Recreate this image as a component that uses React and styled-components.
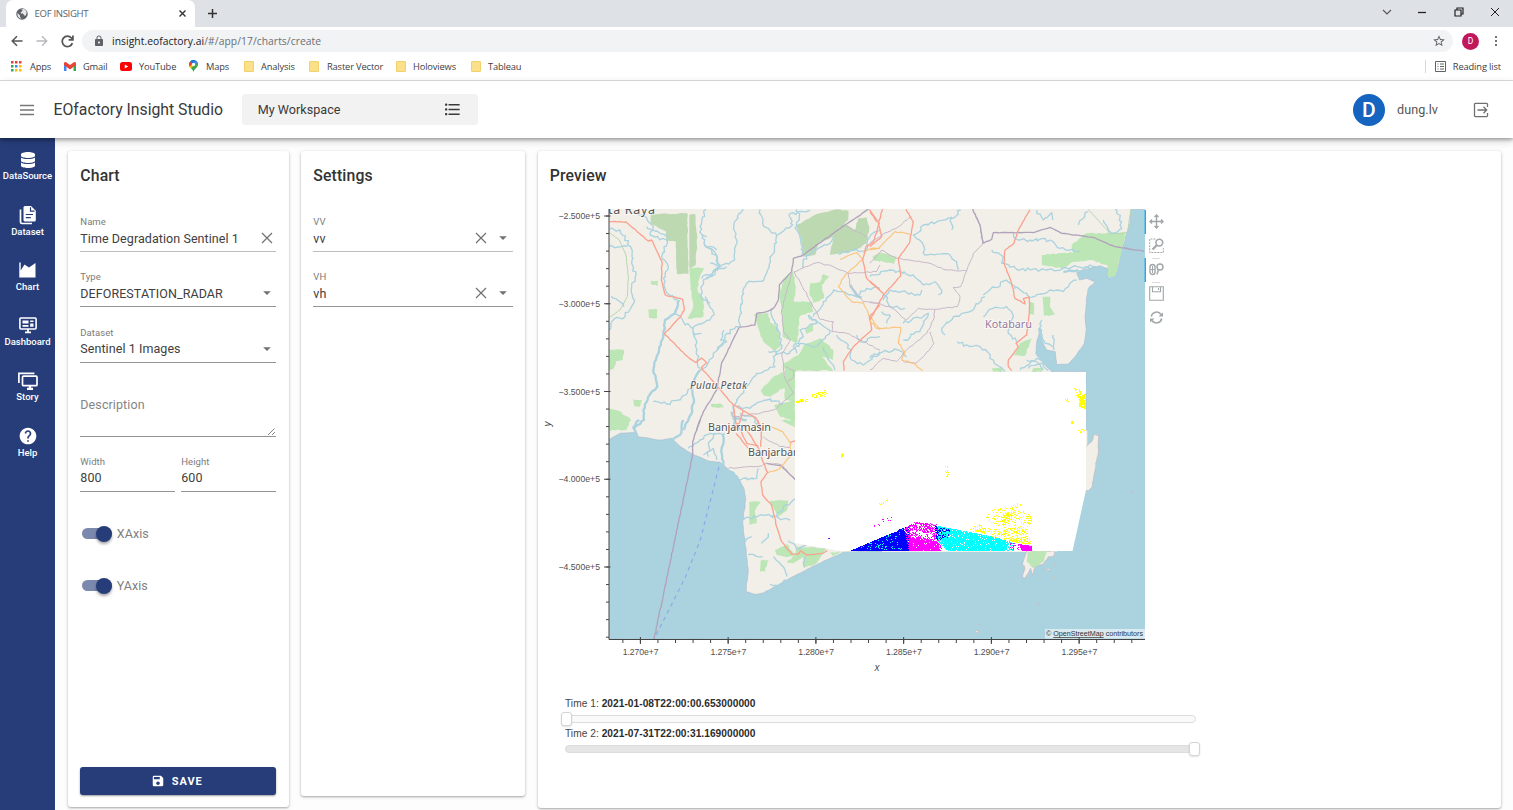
import React from "react";
import styled, { createGlobalStyle } from "styled-components";
import { FaDatabase } from "react-icons/fa";
import { MdSave, MdHelp, MdFormatListBulleted, MdLock, MdStarBorder } from "react-icons/md";

const NAVY = "#263d7a";
const chromeFont = '"Open Sans", "Noto Sans", sans-serif';
const appFont = 'Roboto, "Liberation Sans", sans-serif';
const plotFont = '"Liberation Sans", Arial, sans-serif';

const GlobalStyle = createGlobalStyle`
  * { box-sizing: border-box; }
  body { margin: 0; background: #fff; overflow: hidden; font-family: ${appFont}; }
`;

const Page = styled.div`
  display: flex; flex-direction: column; width: 100vw; height: 100vh; overflow: hidden;
`;

/* ---------- browser frame ---------- */
const TabStrip = styled.div`
  display: flex; height: 27px; flex: none; background: #dee1e6; padding-left: 6px;
`;
const Tab = styled.div`
  display: flex; align-items: center; width: 189px; height: 27px; padding: 0 9px 0 10px;
  background: #fff; border-radius: 7px 7px 0 0; font: 9.6px ${chromeFont}; color: #5f6368;
`;
const TabTitle = styled.span`
  flex: 1; margin-left: 6.5px; letter-spacing: -0.33px;
`;
const NewTab = styled.div`
  display: flex; align-items: center; padding-left: 12px; flex: 1;
`;
const WindowButtons = styled.div`
  display: flex; align-items: center; height: 23px; gap: 25.3px; padding-right: 13px;
`;
const Toolbar = styled.div`
  display: flex; align-items: center; height: 28px; flex: none; padding: 0 12px 0 11px; background: #fff;
`;
const NavButtons = styled.div`
  display: flex; gap: 13px; width: 71px; align-items: center;
`;
const AddressBar = styled.div`
  display: flex; align-items: center; flex: 1; height: 22px; border-radius: 11px; background: #f1f3f4;
  padding: 0 7px 0 11px; color: #5f6368; font: 10.3px ${chromeFont}; margin-right: 9px;
`;
const Url = styled.span`
  flex: 1; margin-left: 7px; color: #6b6f74; letter-spacing: 0.06px;
  b { font-weight: 400; color: #202124; }
`;
const Profile = styled.div`
  display: flex; align-items: center; justify-content: center; width: 17px; height: 17px; border-radius: 50%;
  background: #c2185b; color: #fff; font: 8.5px ${appFont}; margin-right: 12px;
`;
const Bookmarks = styled.div`
  display: flex; align-items: center; height: 26px; flex: none; padding: 0 12px 3px 11px; font: 9.3px ${chromeFont};
  color: #3c4043; border-bottom: 1px solid #dcdee1;
`;
const Bookmark = styled.div`
  display: flex; align-items: center; width: ${(p) => p.$w}px; gap: ${(p) => p.$gap || 7}px; white-space: nowrap;
  letter-spacing: -0.14px;
`;
const Folder = styled.i`
  width: 10px; height: 11px; border-radius: 1px; background: #fbe08a; border: 1px solid #f2d06b;
`;
const ReadingList = styled.div`
  display: flex; align-items: center; gap: 7px; margin-left: auto; padding-left: 9px; height: 13px;
  border-left: 1px solid #d5d7da; letter-spacing: -0.13px;
`;

/* ---------- application header ---------- */
const AppHeader = styled.header`
  display: flex; align-items: center; height: 57px; flex: none; background: #fff; padding: 0 24px 0 20px;
  box-shadow: 0 2px 3px rgba(0,0,0,.25), 0 3px 8px rgba(0,0,0,.18); z-index: 2; color: #3a3a3a;
`;
const AppTitle = styled.h1`
  margin: 0 0 0 19.5px; width: 188.5px; font: 400 15.8px ${appFont}; white-space: nowrap; letter-spacing: -0.01px;
`;
const Workspace = styled.div`
  display: flex; align-items: center; justify-content: space-between; width: 236px; height: 31px;
  padding: 0 15.7px; border-radius: 3px; background: #f2f2f2; font-size: 12.6px; letter-spacing: 0.02px;
`;
const User = styled.div`
  display: flex; align-items: center; margin-left: auto; font-size: 12.6px; letter-spacing: .05px;
  > span { width: 76px; margin-left: 12px; color: #555; }
`;
const Avatar = styled.div`
  display: flex; align-items: center; justify-content: center; width: 32px; height: 32px; border-radius: 50%;
  background: #1565c0; color: #fff; font-size: 21px; font-weight: 500;
`;

/* ---------- body ---------- */
const Body = styled.div`
  display: flex; flex: 1; min-height: 0; background: #fdfdfd;
`;
const Sidebar = styled.nav`
  width: 55px; flex: none; background: ${NAVY}; color: #fff;
`;
const SideItem = styled.div`
  display: flex; flex-direction: column; align-items: center; height: 55.25px; padding-top: 11.5px;
  font-size: 9.5px; font-weight: 500; white-space: nowrap;
  svg { height: 20px; flex: none; }
  span { line-height: 12px; margin-top: 0.8px; }
`;
const Panels = styled.main`
  display: flex; align-items: flex-start; flex: 1; padding: 12.6px 13px 0 13px; gap: 12.5px;
`;
const Card = styled.section`
  display: flex; flex-direction: column; width: ${(p) => p.$w}; height: ${(p) => p.$h}px; padding: 0 12.3px 12px;
  background: #fff; border-radius: 3px; box-shadow: 0 1px 2px rgba(0,0,0,.26), 0 1px 4px rgba(0,0,0,.12);
`;
const CardTitle = styled.h2`
  margin: 0; height: ${(p) => p.$h || 46.2}px; flex: none; padding-top: 15.9px; font: 500 15.8px/19px ${appFont}; color: #333;
  letter-spacing: 0.12px;
`;
const Field = styled.div`
  display: flex; flex-direction: column; justify-content: flex-end; width: 100%; height: ${(p) => p.$h || 55.25}px;
  flex: none; border-bottom: 1px solid ${(p) => p.$line || "#949494"}; padding-bottom: 4.8px;
`;
const Label = styled.label`
  font-size: 9.5px; line-height: 12px; color: #7b7b7b; margin-bottom: 2px; letter-spacing: .06px;
`;
const Value = styled.div`
  display: flex; align-items: center; height: 16px; font-size: 12.5px; color: #404040; letter-spacing: .07px; white-space: nowrap;
  > span { flex: 1; }
  > svg { margin-right: 3.5px; }
  > svg + svg { margin-left: 4.5px; }
  > svg[data-caret] { margin-right: 1.5px; }
`;
const Description = styled.div`
  display: flex; justify-content: space-between; height: 74.5px; flex: none; padding-top: 33px;
  border-bottom: 1px solid #949494; color: #858585; font-size: 12.5px; line-height: 18px; letter-spacing: .1px;
  svg { align-self: flex-end; }
`;
const Pair = styled.div`
  display: grid; grid-template-columns: 1fr 1fr; gap: 6px;
`;
const Switches = styled.div`
  margin-top: 16px; flex: 1;
`;
const SwitchRow = styled.div`
  display: flex; align-items: center; height: 52px; gap: 5px; color: #808080; font-size: 12.5px; letter-spacing: .05px;
`;
const Track = styled.div`
  display: flex; align-items: center; justify-content: flex-end; width: 30px; height: 11px; margin-left: 1.5px;
  border-radius: 6px; background: #7c89ae;
`;
const Thumb = styled.i`
  width: 16px; height: 16px; flex: none; border-radius: 50%; background: ${NAVY}; box-shadow: 0 2px 3px rgba(0,0,0,.35);
`;
const SaveButton = styled.button`
  display: flex; align-items: center; justify-content: center; gap: 7px; height: 28px; width: 100%; border: 0;
  border-radius: 3px; background: ${NAVY}; color: #fff; font: 700 11px ${appFont}; letter-spacing: .95px;
  box-shadow: 0 1px 2px rgba(0,0,0,.4); padding: 0 9px 0 6px;
`;

/* ---------- preview ---------- */
const Plot = styled.div`
  display: flex; align-items: flex-start; height: 498px; margin-left: -8.8px;
`;
const PlotSvg = styled.svg`
  display: block; flex: none; font-family: ${plotFont};
`;
const Tools = styled.div`
  display: flex; flex-direction: column; padding-top: 9.6px; margin-left: -1px;
`;
const Tool = styled.div`
  display: flex; align-items: center; height: 24px; padding-left: 3px;
  border-left: 1px solid ${(p) => (p.$on ? "#26aae1" : "transparent")};
  box-shadow: ${(p) => (p.$on ? "-1px 0 0 #6cc2e8" : "none")};
`;
const Divider = styled.i`
  width: 8px; height: 1px; margin: 0 0 -1px 7px; background: #dcdcdc;
`;
const Sliders = styled.div`
  width: 631px; margin-left: 15.2px;
`;
const SliderLabel = styled.div`
  height: 12px; font: 10.2px/12px ${plotFont}; color: #444; white-space: nowrap; letter-spacing: 0.03px;
  b { color: #2c2c2c; }
`;
const SliderTrack = styled.div`
  display: flex; align-items: center; justify-content: ${(p) => (p.$end ? "flex-end" : "flex-start")};
  height: 8px; margin: 5px 0; border: 1px solid #dcdcdc; border-radius: 4px;
  background: ${(p) => (p.$end ? "#e5e5e5" : "#fafafa")};
`;
const Handle = styled.i`
  width: 11px; height: 14px; margin: 0 -5px; flex: none; border: 1px solid #d4d4d4; border-radius: 3px; background: #fff;
  box-shadow: 0 1px 2px rgba(0,0,0,.12);
`;

/* ---------- icons ---------- */
const Line = ({ w = 14, h = w, vb = "0 0 24 24", d, sw = 2, color = "#5f6368", fill = "none" }) => (
  <svg width={w} height={h} viewBox={vb} fill={fill} stroke={color} strokeWidth={sw}><path d={d} /></svg>
);
const Cross = () => <Line w={12} vb="0 0 12 12" sw={1.2} color="#707070" d="M1 1l10 10M11 1L1 11" />;
const Caret = () => (
  <svg data-caret width="16" height="10" viewBox="0 0 16 10"><path d="M4.2 3.2h7.6L8 7z" fill="#707070" /></svg>
);
const Globe = () => (
  <svg width="12" height="12" viewBox="0 0 24 24"><circle cx="12" cy="12" r="11.5" fill="#5f6368" />
    <path d="M3 10l5 5v3l3 3C6 21 2 17 3 10zM10 3l3 1-1 3-3 2 1 2h4l2 3 2 2c5-4 4-11-2-14z" fill="#fff" opacity=".85" /></svg>
);
const AppsGrid = () => (
  <svg width="11" height="11" viewBox="0 0 11 11">
    {["#ea4335", "#ea4335", "#ea4335", "#34a853", "#4285f4", "#fbbc04", "#34a853", "#fbbc04", "#fbbc04"].map((c, i) => (
      <rect key={i} x={(i % 3) * 4} y={Math.floor(i / 3) * 4} width="2.5" height="2.5" fill={c} />
    ))}
  </svg>
);
const Gmail = () => (
  <svg width="12" height="9" viewBox="0 0 24 18"><path d="M0 3v15h5V8z" fill="#4285f4" /><path d="M24 3v15h-5V8z" fill="#34a853" />
    <path d="M0 3c0-3 3-4 5-2l7 5 7-5c2-2 5-1 5 2v3l-12 9L0 6z" fill="#ea4335" /></svg>
);
const YouTube = () => (
  <svg width="12" height="9" viewBox="0 0 24 18"><rect width="24" height="18" rx="5" fill="#f00" /><path d="M9.5 5l7 4-7 4z" fill="#fff" /></svg>
);
const MapsPin = () => (
  <svg width="9" height="12" viewBox="0 0 18 24"><path d="M9 0a9 9 0 0 0-9 9c0 6 7 8 9 15 2-7 9-9 9-15a9 9 0 0 0-9-9z" fill="#34a853" />
    <path d="M2 3.500A9 9 0 0 1 12 .5L9 9z" fill="#1a73e8" /><path d="M2 3.500C0 6-.5 9 1 13l8-4z" fill="#ea4335" />
    <path d="M1 13l12-9 3 0-12 13z" fill="#fbbc04" /><path d="M12 .5c3 1 5 3 6 6L9 9z" fill="#4285f4" /><circle cx="9" cy="9" r="3.300" fill="#fff" /></svg>
);
const DocsIcon = () => (
  <svg width="18" height="20" viewBox="0 0 18 20" fill="none">
    <path d="M1.500 4.500V17a1.500 1.500 0 0 0 1.500 1.500h10" stroke="#fff" strokeWidth="1.700" />
    <path d="M6 1h6l4.800 4.800V15a1.500 1.500 0 0 1-1.500 1.500H6A1.500 1.500 0 0 1 4.500 15V2.500A1.500 1.500 0 0 1 6 1z" fill="#fff" />
    <path d="M11.500 2.200v4h4M6.800 9.500h7.200M6.800 12.700h5" stroke={NAVY} strokeWidth="1.200" />
  </svg>
);
const AreaIcon = () => (
  <svg width="17" height="20" viewBox="0 0 17 20"><path d="M.3 2.500h1.400v8L5.500 4.500l4.500 3L16.500 3V17.500H.3z" fill="#fff" /></svg>
);
const DashIcon = () => (
  <svg width="18" height="20" viewBox="0 0 18 20" fill="none" stroke="#fff"><rect x=".9" y="3" width="16.200" height="11" rx="1" strokeWidth="1.600" />
    <path d="M3.500 5.500h6v3h-6zM3.500 10h6v1.800h-6zM11.200 5.500h3.300v1.500h-3.300zM11.200 8.500h3.300v3.300h-3.300z" fill="#fff" stroke="none" />
    <path d="M6 17.300h6M9 14v3" strokeWidth="1.800" /></svg>
);
const StoryIcon = () => (
  <svg width="20" height="20" viewBox="0 0 20 20" fill="none" stroke="#fff" strokeWidth="1.700"><path d="M.9 12V2.300h15.500" />
    <rect x="4.500" y="5.200" width="14.500" height="9.500" rx="1" /><path d="M9 17.800h6M12 15v2" strokeWidth="2.200" /></svg>
);
const ExitIcon = () => (
  <Line w={16} vb="0 0 16 16" sw={1.3} color="#707070" d="M14.500 5V2.200c0-.5-.3-.8-.8-.8H2.300c-.5 0-.8.3-.8.8v11.600c0 .5.3.8.8.8h11.400c.5 0 .8-.3.8-.8V11M4.500 8h9M10.500 4.800L13.700 8l-3.200 3.200" />
);

/* ---------- map drawing ---------- */
const random = (seed) => () => {
  seed = (seed * 16807) % 2147483647;
  return seed / 2147483647;
};

// Turns "x,y x,y" into a path whose segments are broken up by small random bends.
const bend = (text, amp = 5, close = false) => {
  const pts = text.trim().split(/\s+/).map((p) => p.split(",").map(Number));
  const rnd = random(Math.abs(Math.round(pts[0][0] * 31 + pts[0][1] * 17)) + 7);
  let d = `M${pts[0]}`;
  for (let i = 1; i < pts.length; i++) {
    const [x0, y0] = pts[i - 1], [x1, y1] = pts[i];
    const n = Math.max(1, Math.round(Math.hypot(x1 - x0, y1 - y0) / 9));
    for (let k = 1; k < n; k++) {
      d += `L${(x0 + ((x1 - x0) * k) / n + (rnd() - 0.5) * amp).toFixed(1)},${(y0 + ((y1 - y0) * k) / n + (rnd() - 0.5) * amp).toFixed(1)}`;
    }
    d += `L${x1},${y1}`;
  }
  return close ? d + "Z" : d;
};

const KINDS = {
  sea: { fill: "#abd3df", stroke: "#a6b4c8", strokeWidth: 1.5, amp: 2, close: true },
  open: { fill: "#abd3df", amp: 0, close: true },
  land: { fill: "#f2efe9", stroke: "#c5b3bd", strokeWidth: 2, amp: 3, close: true },
  wood: { fill: "#bcd9b2", amp: 3, close: true },
  green: { fill: "#bce6b5", amp: 4, close: true },
  river: { stroke: "#abd3df", strokeWidth: 4, amp: 10 },
  wide: { stroke: "#abd3df", strokeWidth: 7, amp: 5 },
  road: { stroke: "#fba28f", strokeWidth: 4, amp: 2 },
  minor: { stroke: "#fbc57f", strokeWidth: 3.5, amp: 4 },
  border: { stroke: "#c8b7c8", strokeWidth: 3, amp: 4 },
  state: { stroke: "#b1a2bb", strokeWidth: 4, amp: 2 },
  park: { stroke: "#b6d6ad", strokeWidth: 3, amp: 1 },
};
const Tile = ({ x, y, features }) => (
  <g transform={`translate(${x} ${y}) scale(.33333)`} fill="none" strokeLinejoin="round">
    {features.map(([kind, pts], i) => {
      const { amp, close, ...style } = KINDS[kind];
      return <path key={i} d={bend(pts, amp, close)} {...style} />;
    })}
  </g>
);

const NORTH_WEST = [
  ["wood", "152,42 262,40 265,222 230,222 228,125 198,122 198,95 152,70"],
  ["wood", "268,45 285,42 292,110 287,195 268,205"],
  ["green", "268,203 312,204 300,230 292,270 312,300 310,350 262,356 280,320 272,260"],
  ["wood", "588,78 650,42 710,28 745,32 745,60 700,110 655,130 645,165 610,170 602,110"],
  ["wood", "690,165 702,105 735,72 765,90 775,55 800,52 808,80 800,130 765,152"],
  ["green", "818,172 840,158 840,185 820,180"],
  ["green", "580,215 588,260 582,305 635,305 640,335 600,348 590,430 548,410 545,330 538,290 550,235"],
  ["green", "630,250 660,245 670,222 688,230 665,255 672,295 640,310 628,280"],
  ["green", "462,342 505,340 510,365 535,385 542,440 520,452 490,425 480,400"],
  ["green", "612,435 660,415 700,450 698,480 665,470 700,512 588,512 585,605 555,600 552,490 600,460"],
  ["green", "482,572 520,530 552,515 555,560 512,590 490,585"],
  ["green", "522,615 585,600 585,665 540,650"],
  ["green", "152,242 174,242 174,258 154,254"], ["green", "145,328 172,328 172,354 147,354"],
  ["green", "28,448 72,450 68,480 48,484 40,508 28,510"], ["green", "100,598 126,600 120,620 102,618"],
  ["green", "28,625 55,632 92,656 80,690 28,690"], ["green", "332,612 365,612 372,622 335,622"],
  ["green", "615,390 640,370 640,392 620,402"],
  ["park", "28,98 58,120 78,165 85,230 82,290 60,330 28,352"],
  ["river", "28,140 82,138"], ["river", "30,88 60,90 92,140 95,190 108,225 95,260 104,300 75,350 45,355 28,390"],
  ["river", "34,288 60,305 72,320"],
  ["river", "75,28 135,50 160,80 150,105 200,120 185,170 205,200 190,235 202,280 232,300"],
  ["river", "140,80 180,100 205,115"],
  ["wide", "238,300 225,340 195,360 190,410 170,470 160,510 172,560 145,590 130,630 132,660 100,688"],
  ["river", "225,335 250,365 278,385 330,360 342,345 322,300 315,290"],
  ["river", "318,28 300,80 312,130 335,150 360,195 342,225 310,240 302,285 330,310"],
  ["river", "312,130 350,150"], ["river", "305,105 320,110"],
  ["river", "430,28 402,70 410,120 404,180 360,200 320,238"],
  ["river", "320,138 350,165 358,200 330,190"], ["river", "305,235 330,225 360,205 380,200"],
  ["river", "480,28 488,70 530,108 508,200 492,240 440,250 425,290 418,380"],
  ["river", "530,105 578,75 568,42 630,30"], ["river", "590,28 598,60 585,85 602,120 606,165"],
  ["river", "610,205 618,165 690,130 700,110"], ["river", "715,162 760,150 800,150 812,105 840,90"],
  ["river", "418,380 380,400 368,430 340,460 325,488 300,510"],
  ["river", "372,390 362,420 380,425 352,448"],
  ["wide", "300,510 275,550 282,600 275,640 250,690"],
  ["river", "280,385 290,430 292,480 300,505"], ["river", "278,400 304,400"],
  ["river", "160,605 200,612 235,600 275,568"], ["river", "515,325 518,355 540,400 545,445 520,470 525,500 470,520 440,560 410,600 398,640"],
  ["river", "505,455 560,462 600,430 650,440 690,392 660,370 625,345"],
  ["river", "625,345 650,370 600,390 610,410 580,440 590,460"],
  ["river", "670,440 690,485 705,510"], ["river", "640,350 700,270 770,290 800,265 840,265"],
  ["river", "710,405 745,435 755,480 790,495 840,455"], ["river", "770,405 780,425 840,410"],
  ["wide", "752,255 772,290 785,292"], ["river", "410,620 450,625 500,600 550,610"],
  ["wide", "395,635 405,665 400,690"], ["wide", "398,655 440,660"], ["river", "420,640 460,650 470,680"],
  ["state", "418,382 465,375 470,340 500,335 520,325 535,300 538,255 575,215 580,175 605,168 735,75 805,28"],
  ["state", "418,382 365,488 350,570 310,635 290,690"],
  ["border", "735,75 770,95 800,110"], ["border", "583,215 650,188 700,200 745,220 830,215 840,195"],
  ["border", "583,215 660,358 700,365 695,395 740,400 840,450"], ["border", "577,215 545,330 550,395 572,420 545,465 555,535 580,580 550,605 530,625 480,640 400,650"],
  ["border", "745,220 750,260 790,305 840,310"], ["border", "555,500 580,510 582,530 562,545"],
  ["minor", "720,178 770,158 788,178 735,225 715,260 755,305 790,308 810,350 840,390"], ["minor", "790,160 815,145 840,145"],
  ["road", "28,65 78,66 145,123 155,120 186,185 184,240 196,285 248,298 253,330 240,352 193,402 268,475 288,488 304,474 320,488 304,504 400,615 430,632 470,655"],
  ["road", "808,28 838,70 820,125 798,140 788,180 800,235 840,270"], ["road", "840,315 808,350 815,390 760,440 730,485 732,512"],
  ["road", "400,615 412,690"], ["road", "430,632 410,690"], ["road", "470,655 482,690"],
];
const NORTH_EAST = [
  ["sea", "783,28 780,70 770,100 752,160 745,200 717,238 713,205 690,197 640,210 620,218 628,240 650,235 675,245 655,265 650,290 645,350 649,390 643,430 615,470 595,492 560,494 556,455 530,450 516,425 510,385 500,430 497,460 520,490 545,515 648,515 648,690 840,690 840,28"],
  ["green", "515,165 610,158 605,135 650,100 768,98 752,165 735,228 715,230 712,195 660,180 610,185 575,205 516,195"],
  ["green", "8,170 35,158 80,170 72,192 12,180"], ["green", "518,290 540,290 540,320 555,345 522,348"],
  ["green", "450,430 485,415 465,468 432,465"], ["green", "365,505 395,503 398,515 370,515"], ["green", "478,305 492,310 492,345 478,343"],
  ["green", "490,505 520,503 515,515 485,515"],
  ["park", "655,28 722,102 772,98 783,28"],
  ["river", "272,30 250,55 160,75 130,105 160,135 165,165 240,165 260,185 265,210"], ["river", "245,50 245,90"],
  ["river", "0,230 60,210 130,225 155,250 200,250 215,270 205,285"], ["river", "40,300 60,270 150,285 155,270"],
  ["river", "40,280 60,320 105,325"], ["river", "340,285 410,240"], ["river", "345,290 300,335 250,350 215,385 225,405"],
  ["river", "365,150 400,170 395,190 440,208 530,210 620,200 660,205"], ["river", "430,100 445,120 540,120 570,145 630,155"],
  ["river", "340,350 370,325 410,320 430,350 415,400 440,425"], ["river", "410,240 480,292 540,270 580,275 600,250 620,240"],
  ["river", "262,425 300,440 330,440 370,480 405,515"], ["river", "0,475 40,455 85,450 110,470"], ["river", "100,370 175,340 150,395 100,420"],
  ["river", "35,335 60,345 50,370"], ["river", "500,30 520,60 545,38 548,60"], ["river", "655,35 632,60 625,75"],
  ["river", "700,60 725,100 755,85 755,65 735,28"], ["river", "515,360 508,385 520,420 548,440"], ["river", "550,405 552,450"],
  ["wide", "508,385 518,430 500,455"], ["river", "450,510 500,475 530,490"], ["river", "475,505 510,490 535,512"], ["river", "620,215 660,195 690,208"],
  ["river", "470,480 500,485 520,510"], ["wide", "580,215 625,210"],
  ["border", "125,50 85,80 35,105 0,130"], ["border", "0,190 35,150 80,175 120,180 180,190 220,208 290,213 310,160 338,132 330,75 308,28"],
  ["border", "290,213 272,260 250,262 270,290 262,320 190,328 145,325 110,360 60,320 0,305"], ["border", "195,330 190,360 170,400 110,450 80,485 40,475 0,510"],
  ["border", "180,395 192,430 160,470 135,490 100,485"],
  ["state", "340,130 330,75 308,28"],
  ["state", "340,130 365,118 370,98 490,98 540,82 575,100 670,112 735,140 822,154"],
  ["minor", "0,150 25,145 75,95 120,103"], ["minor", "0,360 20,385 92,382 85,430 105,455 95,480 130,490 158,512"],
  ["road", "38,28 25,70 35,110 0,140"], ["road", "0,35 20,65"], ["road", "108,28 130,65 118,130 85,175 92,228 40,285 0,360"], ["road", "0,245 40,280"],
  ["road", "480,30 445,90 432,130 405,150 402,190 425,250 435,295 465,312 460,296 478,292 478,340 470,405 438,430 445,440 415,480 415,500 425,512"],
];
const SOUTH_WEST = [
  ["sea", "28,58 60,40 105,37 115,50 180,60 215,55 245,82 278,103 330,124 360,126 385,148 412,168 432,205 437,240 428,310 437,380 445,450 438,515 465,523 490,519 560,480 640,438 730,397 845,392 845,658 28,658"],
  ["green", "28,0 95,0 75,22 28,34"], ["green", "540,0 585,0 585,22"],
  ["green", "510,242 565,242 560,272 535,290 512,255"], ["green", "448,245 482,245 465,272 470,310 448,315"],
  ["green", "525,390 560,372 585,405 560,412 530,405"], ["green", "590,380 680,384 650,430 612,445 608,410 580,430 560,428 585,405"],
  ["green", "482,422 505,420 495,455 480,455"], ["green", "690,398 722,394 700,408"],
  ["wide", "118,0 100,22 112,48"], ["wide", "250,0 240,45 215,60"], ["river", "265,85 300,60 330,40 370,45"],
  ["wide", "372,40 365,100 370,135"], ["river", "310,105 340,85 350,120"], ["river", "325,110 325,70 345,40"],
  ["river", "370,140 420,180 470,175 475,145"], ["river", "430,300 480,285 530,290 550,260 585,238"], ["river", "530,290 570,300"],
  ["river", "485,370 505,340"], ["river", "437,365 455,350"], ["river", "445,405 488,410"], ["river", "520,410 550,440 560,470"],
  ["river", "510,492 535,496 555,478"], ["river", "565,362 590,388 620,370"], ["river", "612,440 615,410"],
  ["border", "385,145 470,140 500,130 545,135 560,150 585,180"], ["border", "490,50 540,80 570,82"], ["state", "500,130 545,138 585,178"],
  ["state", "300,0 278,65 278,103 162,658"], ["minor", "515,20 548,35 572,70 570,110 540,145 505,158"],
  ["road", "412,10 440,70 475,78"], ["road", "408,40 445,85"], ["road", "430,15 478,88 487,120 503,158 483,185 488,225 515,255 530,320 545,365 575,402 595,402 602,392 620,405 668,400 682,392"],
  ["road", "473,0 485,30 482,80"], ["road", "570,68 585,63"],
];
const SOUTH_EAST = [
  ["open", "-85,396 560,396 560,100 652,100 652,-40 840,-40 840,660 -85,660"],
  ["land", "646,82 665,65 675,43 686,48 685,95 672,165 667,200 655,212 646,212"],
  ["land", "470,393 555,393 552,408 535,410 520,432 495,440 488,465 482,445 465,475 457,470 465,445 457,432"],
  ["green", "473,395 532,393 520,425 490,445 470,425"],
  ["land", "530,448 538,445 540,450 532,453"], ["land", "550,433 557,433 557,438"], ["land", "550,470 558,472 556,478"],
  ["land", "315,632 325,632 324,638 316,638"], ["land", "785,215 791,215 791,218"], ["land", "502,551 507,551 507,554"], ["land", "324,612 329,612 328,615"],
];

// Speckled pixels of a classification class, filling the polygon at the given density.
const inside = (x, y, poly) => {
  let hit = false;
  for (let i = 0, j = poly.length - 1; i < poly.length; j = i++) {
    const [xi, yi] = poly[i], [xj, yj] = poly[j];
    if (yi > y !== yj > y && x < ((xj - xi) * (y - yi)) / (yj - yi) + xi) hit = !hit;
  }
  return hit;
};
const speckle = (poly, density, seed) => {
  const rnd = random(seed);
  const xs = poly.map((p) => p[0]), ys = poly.map((p) => p[1]);
  let d = "";
  for (let y = Math.floor(Math.min(...ys)); y < Math.max(...ys); y++)
    for (let x = Math.floor(Math.min(...xs)); x < Math.max(...xs); x++)
      if (inside(x + 0.5, y + 0.5, poly) && rnd() < density) d += `M${x} ${y}h1v1h-1z`;
  return d;
};
const BLUE = "#0000ff", CYAN = "#00ffff", PINK = "#ff00ff", YELLOW = "#ffff00";
const CLASSES = [
  [BLUE, 1, [[850, 551], [880, 538], [903, 529], [908, 536], [909, 551]]],
  [CYAN, 0.1, [[852, 551], [880, 539], [903, 529], [908, 551]]],
  [BLUE, 0.55, [[898, 530], [909, 526], [912, 551], [902, 551]]],
  [PINK, 0.55, [[904, 529], [915, 522], [937, 524], [942, 551], [909, 551]]],
  [PINK, 0.85, [[909, 538], [925, 537], [940, 544], [940, 551], [909, 551]]],
  ["#fff", 0.55, [[915, 531], [930, 533], [941, 546], [943, 535], [925, 541]]],
  [CYAN, 0.92, [[938, 526], [970, 532], [999, 538], [1009, 543], [1005, 551], [948, 551], [938, 541]]],
  [CYAN, 0.45, [[995, 538], [1013, 542], [1014, 551], [997, 551]]],
  [BLUE, 0.3, [[935, 526], [950, 529], [949, 539], [936, 540]]],
  [PINK, 0.25, [[1010, 543], [1020, 544], [1020, 551], [1008, 551]]],
  [YELLOW, 0.28, [[966, 530], [980, 524], [990, 529], [1025, 528], [1033, 545], [1018, 543], [990, 536]]],
  [YELLOW, 0.6, [[970, 531], [984, 528], [986, 534], [977, 532]]],
  [YELLOW, 0.5, [[1003, 515], [1012, 510], [1013, 520], [1002, 522]]],
  [YELLOW, 0.45, [[1007, 538], [1027, 537], [1033, 546], [1012, 542]]],
  [YELLOW, 0.18, [[985, 519], [992, 510], [1015, 505], [1032, 516], [1031, 532], [998, 528]]],
  [YELLOW, 0.09, [[1010, 504], [1024, 503], [1024, 512], [1010, 510]]],
  [PINK, 1, [[1019, 544], [1032, 546], [1032, 551], [1022, 551]]],
  [YELLOW, 0.75, [[795, 401], [802, 399], [810, 399], [807, 402], [797, 403]]],
  [YELLOW, 0.38, [[810, 395], [826, 390], [829, 396], [820, 399], [812, 397]]],
  [YELLOW, 0.9, [[1079, 400], [1086, 393], [1086, 409], [1079, 407]]],
  [YELLOW, 0.35, [[1074, 388], [1080, 389], [1084, 399], [1077, 398]]],
  [YELLOW, 0.3, [[1064, 399], [1071, 398], [1068, 403]]],
  [YELLOW, 0.7, [[1071, 421], [1074, 421], [1074, 424], [1071, 424]]],
  [YELLOW, 0.35, [[1077, 430], [1085, 429], [1085, 436]]],
  [YELLOW, 0.75, [[840, 456], [843, 453], [844, 455], [842, 458]]],
  [YELLOW, 0.4, [[945, 466], [949, 466], [949, 477], [946, 477]]],
  [YELLOW, 0.3, [[878, 504], [888, 499], [888, 502], [880, 505]]],
  [PINK, 0.07, [[874, 521], [894, 517], [892, 524], [873, 527]]],
  ["#8000ff", 1, [[828, 538], [830, 538], [830, 539], [828, 539]]],
];

const range = (from, to, step) => Array.from({ length: Math.floor((to - from) / step) + 1 }, (_, i) => from + i * step);

const MapPlot = () => (
  <PlotSvg width="605" height="478" viewBox="541 200 605 478">
    <defs><clipPath id="frame"><rect x="609" y="209" width="536" height="430" /></clipPath></defs>
    <g clipPath="url(#frame)">
      <rect x="609" y="209" width="536" height="430" fill="#f2efe9" />
      <Tile x={600} y={420} features={SOUTH_WEST} />
      <Tile x={600} y={200} features={NORTH_WEST} />
      <Tile x={870} y={200} features={NORTH_EAST} />
      <Tile x={870} y={420} features={SOUTH_EAST} />
      <path d="M719 467L700 541L685 578L654 639" stroke="#8fa9e6" strokeWidth="1.200" strokeDasharray="4 4" fill="none" />
      <g fontFamily='"Noto Sans", sans-serif' fontSize="10.800" fill="#555" stroke="#fff" strokeOpacity=".6" strokeWidth="2" paintOrder="stroke">
        <text x="608" y="213.500" fontSize="12.500" textLength="47">ta Raya</text>
        <text x="690" y="389" fontStyle="italic" textLength="57" fontSize="10.200">Pulau Petak</text>
        <text x="708" y="431" textLength="63">Banjarmasin</text>
        <text x="748" y="456" textLength="56">Banjarbaru</text>
        <text x="985" y="328" textLength="47" fill="#957a9d">Kotabaru</text>
      </g>
      <path d="M795 372H1086V490L1072.500 551H840L795 543Z" fill="#fff" />
      <g shapeRendering="crispEdges">
        {CLASSES.map(([color, density, poly], i) => <path key={i} fill={color} d={speckle(poly, density, 101 + i * 37)} />)}
      </g>
      <rect x="1045" y="629" width="100" height="9.500" fill="#fff" opacity=".55" />
      <text x="1046" y="636" fontSize="7" fill="#333" textLength="97" lengthAdjust="spacingAndGlyphs">
        © <tspan textDecoration="underline">OpenStreetMap</tspan> contributors
      </text>
    </g>
    <g stroke="#444" strokeWidth="1">
      <path d="M609 209V639.500M609 639.500H1145" />
      <path d={range(216, 638, 87.75).map((y) => `M604 ${y}h6.500`).join("") + range(216, 638, 17.55).map((y) => `M606 ${y}h3`).join("")} />
      <path d={range(640.4, 1100, 87.75).map((x) => `M${x} 637v7`).join("") + range(622.85, 1142, 17.55).map((x) => `M${x} 640v3`).join("")} />
    </g>
    <g fontSize="8.700" fill="#505050">
      {["−2.500e+5", "−3.000e+5", "−3.500e+5", "−4.000e+5", "−4.500e+5"].map((t, i) => (
        <text key={t} x="558.500" y={219 + i * 87.75} textLength="41.500">{t}</text>
      ))}
      {["1.270e+7", "1.275e+7", "1.280e+7", "1.285e+7", "1.290e+7", "1.295e+7"].map((t, i) => (
        <text key={t} x={622.7 + i * 87.75} y="654.500" textLength="36">{t}</text>
      ))}
      <text x="877" y="670.500" fontStyle="italic" fontSize="10" textAnchor="middle">x</text>
      <text transform="translate(551 424) rotate(-90)" fontStyle="italic" fontSize="10" textAnchor="middle">y</text>
    </g>
  </PlotSvg>
);

const G = "#a1a6a9";
const PlotTools = () => (
  <Tools>
    <Tool $on><Line w={15} vb="0 0 15 15" sw={1.4} color={G} d="M7.500 1v13M1 7.500h13M5.500 3l2-2 2 2M5.500 12l2 2 2-2M3 5.500l-2 2 2 2M12 5.500l2 2-2 2" /></Tool>
    <Tool>
      <svg width="15" height="15" viewBox="0 0 15 15" fill="none" stroke={G}><path d="M6.500 1H.7v13.500h13.600V10" strokeDasharray="2 1" />
        <circle cx="10.300" cy="4.600" r="3.400" strokeWidth="1.600" /><path d="M8 7l-4.500 4.500" strokeWidth="2.200" /></svg>
    </Tool>
    <Divider />
    <Tool $on>
      <svg width="15" height="15" viewBox="0 0 15 15" fill="none" stroke={G} strokeWidth="1.400"><rect x="1" y="2.500" width="5" height="10" rx="2.500" />
        <path d="M3.500 4v7M1.500 7.500h4" strokeWidth="1" /><circle cx="11" cy="5" r="3" /><path d="M9.500 7.500L8 12.500" /></svg>
    </Tool>
    <Divider />
    <Tool><Line w={15} vb="0 0 15 15" sw={1.1} color={G} d="M.7.7h13.600v13.600H.7zM3.500 .7v5h8v-5M9.500 2v2" /></Tool>
    <Tool>
      <svg width="15" height="15" viewBox="0 0 15 15" fill="none" stroke={G} strokeWidth="1.600">
        <path d="M2.300 6.500a5.300 5.300 0 0 1 9.700-2M12.700 8.500a5.300 5.300 0 0 1-9.700 2" />
        <path d="M14 2.500v4h-4.500zM1 12.500v-4h4.500z" fill={G} stroke="none" />
      </svg>
    </Tool>
  </Tools>
);

const SIDE = [
  ["DataSource", <FaDatabase size={14} />], ["Dataset", <DocsIcon />], ["Chart", <AreaIcon />],
  ["Dashboard", <DashIcon />], ["Story", <StoryIcon />], ["Help", <MdHelp size={20} />],
];

const FormField = ({ label, value, clear, caret, ...rest }) => (
  <Field {...rest}>
    <Label>{label}</Label>
    <Value><span>{value}</span>{clear && <Cross />}{caret && <Caret />}</Value>
  </Field>
);

export default function App() {
  return (
    <Page>
      <GlobalStyle />
      <TabStrip>
        <Tab><Globe /><TabTitle>EOF INSIGHT</TabTitle><Line w={7} vb="0 0 7 7" sw={1.4} color="#333" d="M.5.5l6 6M6.500.5l-6 6" /></Tab>
        <NewTab><Line w={11} vb="0 0 11 11" sw={1.5} color="#333" d="M5.500 1v9M1 5.500h9" /></NewTab>
        <WindowButtons>
          <Line w={10} vb="0 0 10 10" sw={1.1} color="#555" d="M1 3l4 4 4-4" />
          <Line w={10} vb="0 0 10 10" sw={1.3} color="#222" d="M1 5.500h8" />
          <Line w={12} h={10} vb="-1 0 12 10" sw={1.2} color="#222" d="M1 3h6v6H1zM3 3V1h6v6H7" />
          <Line w={10} vb="0 0 10 10" sw={1} color="#222" d="M1 1l8 8M9 1L1 9" />
        </WindowButtons>
      </TabStrip>
      <Toolbar>
        <NavButtons>
          <Line w={12} vb="0 0 12 12" sw={1.500} color="#555" d="M11.500 6H1.500M6 1.200L1.200 6 6 10.800" />
          <Line w={12} vb="0 0 12 12" sw={1.3} color="#b5b8bb" d="M.5 6h10M6 1.200L10.800 6 6 10.800" />
          <Line w={13} vb="0 0 12 12" sw={1.600} color="#555" d="M10.500 7.500A4.800 4.800 0 1 1 9.600 2.800L11 4.300M11 .5v4H7" />
        </NavButtons>
        <AddressBar><MdLock size={12} /><Url><b>insight.eofactory.ai</b>/#/app/17/charts/create</Url><MdStarBorder size={14} /></AddressBar>
        <Profile>D</Profile>
        <svg width="10" height="12" viewBox="0 0 10 12" fill="#444"><circle cx="5" cy="2" r="1" /><circle cx="5" cy="6" r="1" /><circle cx="5" cy="10" r="1" /></svg>
      </Toolbar>
      <Bookmarks>
        <Bookmark $w={53} $gap={8}><AppsGrid />Apps</Bookmark>
        <Bookmark $w={56}><Gmail />Gmail</Bookmark>
        <Bookmark $w={69}><YouTube />YouTube</Bookmark>
        <Bookmark $w={55} $gap={8}><MapsPin />Maps</Bookmark>
        <Bookmark $w={65}><Folder />Analysis</Bookmark>
        <Bookmark $w={87} $gap={8}><Folder />Raster Vector</Bookmark>
        <Bookmark $w={75}><Folder />Holoviews</Bookmark>
        <Bookmark $w={70}><Folder />Tableau</Bookmark>
        <ReadingList><Line w={11} vb="0 0 11 11" sw={1} d="M.5.5h10v10H.5zM2.500 3h1M2.500 5.500h1M2.500 8h1M5 3h4M5 5.500h4M5 8h4" />Reading list</ReadingList>
      </Bookmarks>
      <AppHeader>
        <Line w={14} h={12} vb="0 0 14 12" sw={1.4} color="#777" d="M0 1.500h14M0 6h14M0 10.500h14" />
        <AppTitle>EOfactory Insight Studio</AppTitle>
        <Workspace>My Workspace<MdFormatListBulleted size={19} /></Workspace>
        <User><Avatar>D</Avatar><span>dung.lv</span><ExitIcon /></User>
      </AppHeader>
      <Body>
        <Sidebar>{SIDE.map(([name, icon]) => <SideItem key={name}>{icon}<span>{name}</span></SideItem>)}</Sidebar>
        <Panels>
          <Card $w="220.500px" $h={656.6}>
            <CardTitle>Chart</CardTitle>
            <FormField label="Name" value="Time Degradation Sentinel 1" clear $line="#bdbdbd" />
            <FormField label="Type" value="DEFORESTATION_RADAR" caret />
            <FormField label="Dataset" value="Sentinel 1 Images" caret />
            <Description>Description<Line w={8} vb="0 0 8 8" sw={0.9} color="#777" d="M0 7L6.500.5M4 7l3-3" /></Description>
            <Pair>
              <FormField label="Width" value="800" $h={54.5} /><FormField label="Height" value="600" $h={54.5} />
            </Pair>
            <Switches>
              <SwitchRow><Track><Thumb /></Track>XAxis</SwitchRow>
              <SwitchRow><Track><Thumb /></Track>YAxis</SwitchRow>
            </Switches>
            <SaveButton><MdSave size={14} />SAVE</SaveButton>
          </Card>
          <Card $w="224px" $h={645}>
            <CardTitle>Settings</CardTitle>
            <FormField label="VV" value="vv" clear caret $line="#bdbdbd" />
            <FormField label="VH" value="vh" clear caret />
          </Card>
          <Card $w="963px" $h={657}>
            <CardTitle $h={49.4}>Preview</CardTitle>
            <Plot><MapPlot /><PlotTools /></Plot>
            <Sliders>
              <SliderLabel>Time 1: <b>2021-01-08T22:00:00.653000000</b></SliderLabel>
              <SliderTrack><Handle /></SliderTrack>
              <SliderLabel>Time 2: <b>2021-07-31T22:00:31.169000000</b></SliderLabel>
              <SliderTrack $end><Handle /></SliderTrack>
            </Sliders>
          </Card>
        </Panels>
      </Body>
    </Page>
  );
}
